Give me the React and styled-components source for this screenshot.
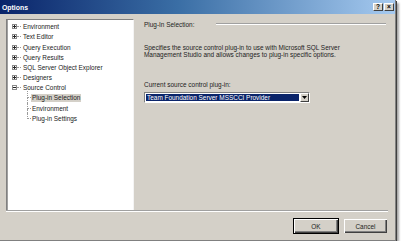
import React from "react";
import styled, { createGlobalStyle } from "styled-components";

const Global = createGlobalStyle`
  html, body { margin: 0; padding: 0; background: #ffffff; }
  body { font-family: "Liberation Sans", Arial, sans-serif; font-size: 6.45px; color: #000; }
`;

const Window = styled.div`
  width: 395px;
  height: 240px;
  background: #d4d0c8;
  border-right: 1px solid #808080;
  border-bottom: 1px solid #808080;
  box-shadow: 1px 1px 0 #404040, 3px 3px 2px rgba(0, 0, 0, 0.35);
  display: flex;
  flex-direction: column;
`;

const TitleBar = styled.div`
  height: 14px;
  background: linear-gradient(90deg, #0a246a 0%, #3a6ea5 45%, #a6caf0 100%);
  display: flex;
  align-items: center;
  padding: 0 1px 0 2px;
`;

const Title = styled.span`
  color: #fff;
  font-weight: bold;
  font-size: 6.9px;
`;

const CaptionButtons = styled.div`
  margin-left: auto;
  display: flex;
  gap: 1px;
`;

const CaptionButton = styled.div`
  width: 8px;
  height: 6px;
  background: #d4d0c8;
  border-top: 1px solid #fff;
  border-left: 1px solid #fff;
  border-right: 1px solid #404040;
  border-bottom: 1px solid #404040;
  display: flex;
  align-items: center;
  justify-content: center;
  font-weight: bold;
  font-size: 6.5px;
  line-height: 6px;
  color: #000;
`;

const Main = styled.div`
  display: flex;
  padding: 5px 9px 0 6px;
  height: 191px;
`;

const Tree = styled.div`
  width: 126px;
  height: 189px;
  background: #fff;
  border-top: 1px solid #808080;
  border-left: 1px solid #808080;
  border-right: 1px solid #f4f4f4;
  border-bottom: 1px solid #f4f4f4;
  box-shadow: inset 1px 0 0 #a0a0a0;
  padding-top: 1.6px;
  box-sizing: content-box;
  display: flex;
  flex-direction: column;
`;

const Row = styled.div`
  display: flex;
  align-items: center;
  height: 10.2px;
  padding-left: 5px;
  color: #1a1a1a;
`;

const Expander = styled.span`
  width: 3px;
  height: 3px;
  border: 1px solid #8a8a8a;
  position: relative;
  flex: none;
  &::before {
    content: "";
    position: absolute;
    left: 0;
    top: 1px;
    width: 3px;
    height: 1px;
    background: #222;
  }
  &::after {
    content: "";
    display: ${(p) => (p.open ? "none" : "block")};
    position: absolute;
    left: 1px;
    top: 0;
    width: 1px;
    height: 3px;
    background: #222;
  }
`;

const Stub = styled.span`
  width: 4px;
  border-top: 1px dotted #9a9a9a;
  margin-right: 1px;
  flex: none;
`;

const ChildRow = styled.div`
  display: flex;
  align-items: stretch;
  height: 10.2px;
  padding-left: 20px;
  color: #1a1a1a;
`;

const Connector = styled.span`
  width: 4px;
  flex: none;
  display: flex;
  flex-direction: column;
  margin-top: ${(p) => (p.first ? "-2px" : "0")};
`;

const ConnUpper = styled.span`
  flex: 1;
  border-left: 1px dotted #9a9a9a;
  border-bottom: 1px dotted #9a9a9a;
`;

const ConnLower = styled.span`
  flex: 1;
  border-left: ${(p) => (p.last ? "none" : "1px dotted #9a9a9a")};
`;

const ItemText = styled.span`
  display: flex;
  align-items: center;
  align-self: center;
  height: 7.4px;
  padding: 0 1px;
  background: ${(p) => (p.selected ? "#d4d0c8" : "transparent")};
  white-space: nowrap;
`;

const Page = styled.div`
  flex: 1;
  padding-left: 10px;
  padding-top: 2.3px;
  display: flex;
  flex-direction: column;
`;

const GroupHeader = styled.div`
  display: flex;
  align-items: flex-start;
  height: 8px;
  line-height: 8px;
  color: #222;
`;

const GroupLine = styled.div`
  flex: 1;
  margin-left: 22px;
  margin-top: 2px;
  height: 0;
  border-top: 1px solid #a0a0a0;
  border-bottom: 1px solid #fff;
`;

const Description = styled.p`
  margin: 14.7px 0 0 0;
  line-height: 7.4px;
  color: #222;
`;

const FieldLabel = styled.div`
  margin-top: 21.8px;
  line-height: 7.4px;
  color: #222;
`;

const Combo = styled.div`
  margin-top: 4px;
  width: 164px;
  height: 9px;
  background: #fff;
  border-top: 1px solid #808080;
  border-left: 1px solid #808080;
  border-right: 1px solid #fff;
  border-bottom: 1px solid #fff;
  display: flex;
  align-items: stretch;
`;

const ComboValue = styled.div`
  flex: 1;
  margin: 1px;
  background: #0a246a;
  color: #fff;
  display: flex;
  align-items: center;
  padding-left: 1px;
  white-space: nowrap;
  overflow: hidden;
`;

const ComboButton = styled.div`
  width: 7px;
  background: #d4d0c8;
  border-top: 1px solid #fff;
  border-left: 1px solid #fff;
  border-right: 1px solid #404040;
  border-bottom: 1px solid #404040;
  display: flex;
  align-items: center;
  justify-content: center;
`;

const Separator = styled.div`
  margin: 0 7px 0 6px;
  border-top: 1px solid #a0a0a0;
  border-bottom: 1px solid #fff;
`;

const Footer = styled.div`
  display: flex;
  justify-content: flex-end;
  gap: 4px;
  padding: 6px 7px 0 0;
`;

const Button = styled.div`
  width: ${(p) => (p.def ? "44px" : "43px")};
  height: ${(p) => (p.def ? "14px" : "14px")};
  background: #d4d0c8;
  box-sizing: content-box;
  border: 1px solid ${(p) => (p.def ? "#000" : "transparent")};
  box-shadow: inset 1px 1px 0 #fff, inset -1px -1px 0 #404040, inset -2px -2px 0 #808080;
  display: flex;
  align-items: center;
  justify-content: center;
  color: #222;
`;

const topItems = [
  "Environment",
  "Text Editor",
  "Query Execution",
  "Query Results",
  "SQL Server Object Explorer",
  "Designers",
];

const children = ["Plug-in Selection", "Environment", "Plug-in Settings"];

export default function App() {
  return (
    <>
      <Global />
      <Window>
        <TitleBar>
          <Title>Options</Title>
          <CaptionButtons>
            <CaptionButton>?</CaptionButton>
            <CaptionButton>×</CaptionButton>
          </CaptionButtons>
        </TitleBar>
        <Main>
          <Tree>
            {topItems.map((t) => (
              <Row key={t}>
                <Expander />
                <Stub />
                <ItemText>{t}</ItemText>
              </Row>
            ))}
            <Row>
              <Expander open />
              <Stub />
              <ItemText>Source Control</ItemText>
            </Row>
            {children.map((c, i) => (
              <ChildRow key={c}>
                <Connector first={i === 0}>
                  <ConnUpper />
                  <ConnLower last={i === children.length - 1} />
                </Connector>
                <ItemText selected={i === 0}>{c}</ItemText>
              </ChildRow>
            ))}
          </Tree>
          <Page>
            <GroupHeader>
              <span>Plug-In Selection:</span>
              <GroupLine />
            </GroupHeader>
            <Description>
              Specifies the source control plug-in to use with Microsoft SQL Server
              <br />
              Management Studio and allows changes to plug-in specific options.
            </Description>
            <FieldLabel>Current source control plug-in:</FieldLabel>
            <Combo>
              <ComboValue>Team Foundation Server MSSCCI Provider</ComboValue>
              <ComboButton>
                <svg width="5" height="3" viewBox="0 0 5 3">
                  <path d="M0 0H5L2.5 3Z" fill="#000" />
                </svg>
              </ComboButton>
            </Combo>
          </Page>
        </Main>
        <Separator />
        <Footer>
          <Button def>OK</Button>
          <Button>Cancel</Button>
        </Footer>
      </Window>
    </>
  );
}
